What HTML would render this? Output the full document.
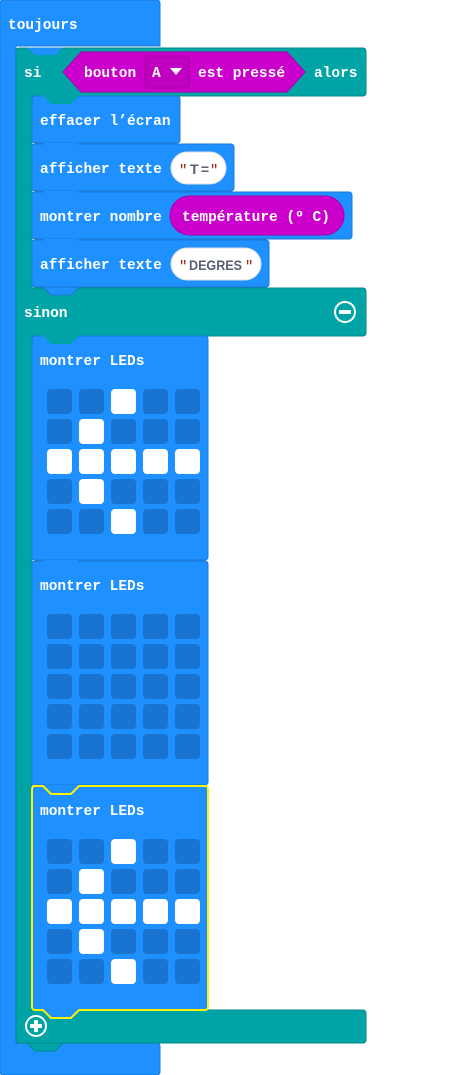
<!DOCTYPE html>
<html><head><meta charset="utf-8"><style>
html,body{margin:0;padding:0;background:#fff;width:456px;height:1075px;overflow:hidden}
svg{display:block}
.t{font-family:"Liberation Mono",monospace;font-weight:bold;font-size:14.5px;fill:#fff}
.s{font-family:"Liberation Sans",sans-serif;font-weight:bold;font-size:14px;fill:#575E75}
.q{font-family:"Liberation Mono",monospace;font-size:14px;fill:#A31515}
</style></head><body>
<svg width="456" height="1075" viewBox="0 0 456 1075" xmlns="http://www.w3.org/2000/svg">
<path d="M3,0H157a3,3 0 0 1 3,3V46H16V1043H157a3,3 0 0 1 3,3V1072a3,3 0 0 1-3,3H3a3,3 0 0 1-3-3V3a3,3 0 0 1 3-3Z" fill="#1E90FF" stroke="#1a7ad8" stroke-width="1"/>
<path d="M19,48H363a3,3 0 0 1 3,3V93a3,3 0 0 1-3,3H32V288H363a3,3 0 0 1 3,3V333a3,3 0 0 1-3,3H32V1010H363a3,3 0 0 1 3,3V1040a3,3 0 0 1-3,3H19a3,3 0 0 1-3-3V51a3,3 0 0 1 3-3Z" fill="#00A4A6" stroke="#008a8c" stroke-width="1"/>
<polygon points="27,47.5 35,55 55,55 63,47.5" fill="#1E90FF"/>
<polygon points="27,1043 35,1051 55,1051 63,1043" fill="#00A4A6" stroke="#008a8c"/>
<text x="8" y="29" class="t">toujours</text>
<text x="24" y="77" class="t">si</text>
<polygon points="63,72 81,52 287,52 305,72 287,92 81,92" fill="#CC00CC" stroke="#a800a8"/>
<rect x="145" y="56" width="44" height="32" rx="3" fill="#C000C0" stroke="#a000a0"/>
<text x="84" y="77" class="t">bouton</text>
<text x="152" y="77" class="t">A</text>
<polygon points="170,68 182,68 176,75" fill="#fff"/>
<text x="198" y="77" class="t">est pressé</text>
<text x="314" y="77" class="t">alors</text>
<rect x="32" y="96" width="148" height="47" rx="3" fill="#1E90FF" stroke="#1a7ad8"/>
<polygon points="43,95.5 51,104 71,104 79,95.5" fill="#00A4A6"/>
<text x="40" y="125" class="t">effacer l’écran</text>
<rect x="32" y="144" width="202" height="47" rx="3" fill="#1E90FF" stroke="#1a7ad8"/>
<polygon points="43,143 51,151 71,151 79,143" fill="#1E90FF"/>
<text x="40" y="173" class="t">afficher texte</text>
<rect x="171" y="152" width="55" height="32" rx="16" fill="#fff" stroke="#ddd"/>
<text x="179" y="174" class="q">"</text><text x="190" y="174" class="s" textLength="19">T=</text><text x="210" y="174" class="q">"</text>
<rect x="32" y="192" width="320" height="47" rx="3" fill="#1E90FF" stroke="#1a7ad8"/>
<polygon points="43,191 51,199 71,199 79,191" fill="#1E90FF"/>
<text x="40" y="221" class="t">montrer nombre</text>
<rect x="170" y="196" width="174" height="39" rx="19.5" fill="#CC00CC" stroke="#a800a8"/>
<text x="182" y="221" class="t">température (º C)</text>
<rect x="32" y="240" width="237" height="47" rx="3" fill="#1E90FF" stroke="#1a7ad8"/>
<polygon points="43,239 51,247 71,247 79,239" fill="#1E90FF"/>
<text x="40" y="269" class="t">afficher texte</text>
<rect x="171" y="248" width="90" height="32" rx="16" fill="#fff" stroke="#ddd"/>
<text x="179" y="270" class="q">"</text><text x="189" y="270" class="s" textLength="53" lengthAdjust="spacingAndGlyphs">DEGRES</text><text x="245" y="270" class="q">"</text>
<polygon points="43,287 51,295 71,295 79,287" fill="#1E90FF" stroke="#1a7ad8"/>
<text x="24" y="317" class="t">sinon</text>
<circle cx="345" cy="312" r="10" fill="none" stroke="#fff" stroke-width="2"/>
<rect x="339" y="310" width="12" height="4" rx="1" fill="#fff"/>
<rect x="32" y="336" width="176" height="224" rx="3" fill="#1E90FF" stroke="#1a7ad8"/>
<polygon points="43,335.5 51,344 71,344 79,335.5" fill="#00A4A6"/>
<text x="40" y="365" class="t">montrer LEDs</text>
<rect x="32" y="561" width="176" height="224" rx="3" fill="#1E90FF" stroke="#1a7ad8"/>
<polygon points="43,560 51,568 71,568 79,560" fill="#1E90FF"/>
<text x="40" y="590" class="t">montrer LEDs</text>
<rect x="32" y="786" width="176" height="224" rx="3" fill="#1E90FF"/>
<polygon points="43,785 51,793 71,793 79,785" fill="#1E90FF"/>
<polygon points="43,1010 51,1018 71,1018 79,1010" fill="#1E90FF"/>
<path d="M35,786H43L51,794H71L79,786H205a3,3 0 0 1 3,3V1007a3,3 0 0 1-3,3H79L71,1018H51L43,1010H35a3,3 0 0 1-3-3V789a3,3 0 0 1 3-3Z" fill="none" stroke="#FFF200" stroke-width="2"/>
<text x="40" y="815" class="t">montrer LEDs</text>
<g id="g1">
<g fill="#1874D0">
<rect x="47" y="389" width="25" height="25" rx="4"/><rect x="79" y="389" width="25" height="25" rx="4"/><rect x="143" y="389" width="25" height="25" rx="4"/><rect x="175" y="389" width="25" height="25" rx="4"/>
<rect x="47" y="419" width="25" height="25" rx="4"/><rect x="111" y="419" width="25" height="25" rx="4"/><rect x="143" y="419" width="25" height="25" rx="4"/><rect x="175" y="419" width="25" height="25" rx="4"/>
<rect x="47" y="479" width="25" height="25" rx="4"/><rect x="111" y="479" width="25" height="25" rx="4"/><rect x="143" y="479" width="25" height="25" rx="4"/><rect x="175" y="479" width="25" height="25" rx="4"/>
<rect x="47" y="509" width="25" height="25" rx="4"/><rect x="79" y="509" width="25" height="25" rx="4"/><rect x="143" y="509" width="25" height="25" rx="4"/><rect x="175" y="509" width="25" height="25" rx="4"/>
</g>
<g fill="#fff">
<rect x="111" y="389" width="25" height="25" rx="4"/>
<rect x="79" y="419" width="25" height="25" rx="4"/>
<rect x="47" y="449" width="25" height="25" rx="4"/><rect x="79" y="449" width="25" height="25" rx="4"/><rect x="111" y="449" width="25" height="25" rx="4"/><rect x="143" y="449" width="25" height="25" rx="4"/><rect x="175" y="449" width="25" height="25" rx="4"/>
<rect x="79" y="479" width="25" height="25" rx="4"/>
<rect x="111" y="509" width="25" height="25" rx="4"/>
</g>
</g>
<use href="#g1" y="450"/>
<g fill="#1874D0" transform="translate(0,225)">
<rect x="47" y="389" width="25" height="25" rx="4"/><rect x="79" y="389" width="25" height="25" rx="4"/><rect x="111" y="389" width="25" height="25" rx="4"/><rect x="143" y="389" width="25" height="25" rx="4"/><rect x="175" y="389" width="25" height="25" rx="4"/>
<rect x="47" y="419" width="25" height="25" rx="4"/><rect x="79" y="419" width="25" height="25" rx="4"/><rect x="111" y="419" width="25" height="25" rx="4"/><rect x="143" y="419" width="25" height="25" rx="4"/><rect x="175" y="419" width="25" height="25" rx="4"/>
<rect x="47" y="449" width="25" height="25" rx="4"/><rect x="79" y="449" width="25" height="25" rx="4"/><rect x="111" y="449" width="25" height="25" rx="4"/><rect x="143" y="449" width="25" height="25" rx="4"/><rect x="175" y="449" width="25" height="25" rx="4"/>
<rect x="47" y="479" width="25" height="25" rx="4"/><rect x="79" y="479" width="25" height="25" rx="4"/><rect x="111" y="479" width="25" height="25" rx="4"/><rect x="143" y="479" width="25" height="25" rx="4"/><rect x="175" y="479" width="25" height="25" rx="4"/>
<rect x="47" y="509" width="25" height="25" rx="4"/><rect x="79" y="509" width="25" height="25" rx="4"/><rect x="111" y="509" width="25" height="25" rx="4"/><rect x="143" y="509" width="25" height="25" rx="4"/><rect x="175" y="509" width="25" height="25" rx="4"/>
</g>
<circle cx="36" cy="1026" r="10" fill="none" stroke="#fff" stroke-width="2"/>
<rect x="30" y="1024" width="12" height="4" rx="1" fill="#fff"/>
<rect x="34" y="1020" width="4" height="12" rx="1" fill="#fff"/>
</svg>
</body></html>
